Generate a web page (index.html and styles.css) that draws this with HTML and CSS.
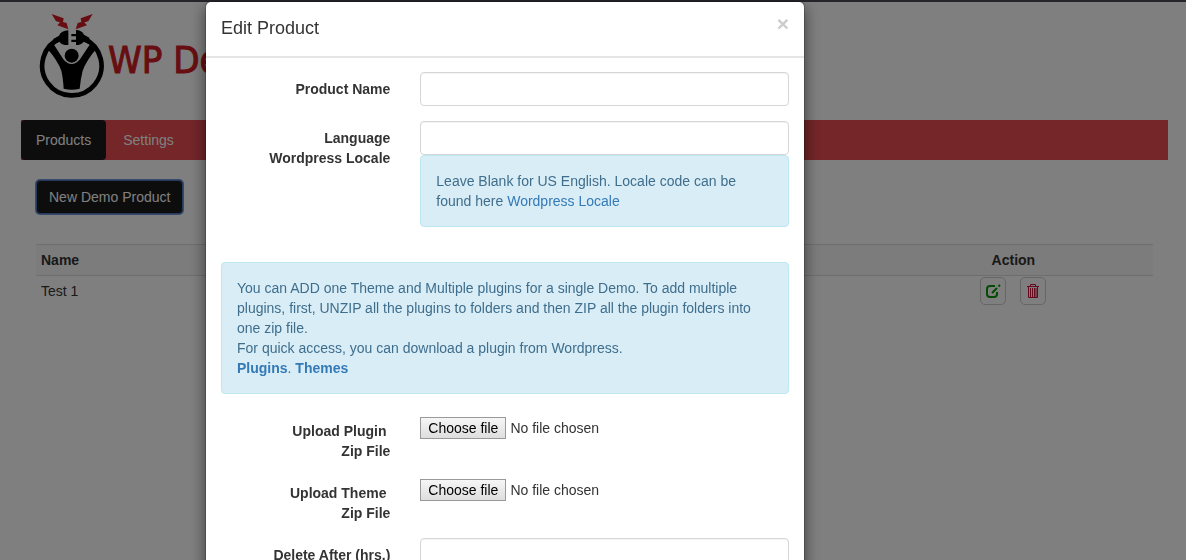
FILE: index.html
```html
<!DOCTYPE html>
<html lang="en">
<head>
<meta charset="utf-8">
<title>WP Demo Builder</title>
<link rel="stylesheet" href="styles.css">
</head>
<body>
<div class="page">
  <header class="brand">
    <svg class="brand-mark" viewBox="24 21 204 264" aria-hidden="true">
      <path d="M94 99 A89 89 0 1 0 162 101" fill="none" stroke="#000" stroke-width="14"/>
      <path d="M115 76 V120 H104 Q94 119 88 110 L70 120 V102 L87 92 Q94 77 115 76Z"/>
      <path d="M138 75 Q155 75 162 89 L178 98 V118 L161 110 Q154 120 138 120 V111 H124 V104 H138 V94 H124 V87 H138Z"/>
      <circle cx="125" cy="152" r="21"/>
      <path d="M52 131 L70 116 L100 163 Q111 177 125 177 Q139 177 150 163 L181 116 L199 131 Q168 168 158 197 Q152 220 149 251 Q125 257 101 251 Q99 218 94 197 Q84 168 52 131Z"/>
      <path fill="#cf1c25" d="M65 27 L101 40 L99 51 L110 54 L115 73 L82 61 L90 52 L78 49Z"/>
      <path fill="#cf1c25" d="M188 27 L152 40 L154 51 L143 54 L137 73 L171 61 L163 52 L175 49Z"/>
    </svg>
    <span class="brand-name">WP Demo Builder</span>
  </header>
  <nav class="tabs">
    <a class="tab tab-active" href="#products">Products</a>
    <a class="tab" href="#settings">Settings</a>
  </nav>
  <main class="content">
    <button type="button" class="btn-new">New Demo Product</button>
    <table class="products">
      <thead>
        <tr><th class="col-name" scope="col">Name</th><th class="col-action" scope="col">Action</th></tr>
      </thead>
      <tbody>
        <tr>
          <td>Test 1</td>
          <td>
            <div class="actions">
              <button type="button" class="icon-btn" aria-label="Edit">
                <svg viewBox="0 0 16 16" width="16" height="16" fill="none" stroke="#0a960a"><path stroke-width="2" d="M10 3H5Q2 3 2 6v5q0 3 3 3h4q3 0 3-3V9"/><path stroke-width="2" d="M7 10l5-5M13.500 3.500l1.500-1.500"/></svg>
              </button>
              <button type="button" class="icon-btn" aria-label="Delete">
                <svg viewBox="0 0 16 16" width="16" height="16" fill="none" stroke="#c8143c"><path d="M2 3.500h12M5.500 3V1.500h5V3M3.500 4v10.500h9V4M5.500 5v9M7.500 5v9"/><path d="M9.500 5v9M11 5v9" stroke-width="1"/></svg>
              </button>
            </div>
          </td>
        </tr>
      </tbody>
    </table>
  </main>
</div>

<div class="backdrop">
  <div class="modal" role="dialog" aria-modal="true" aria-labelledby="modal-title">
    <div class="modal-header">
      <h4 class="modal-title" id="modal-title">Edit Product</h4>
      <button type="button" class="close" aria-label="Close">×</button>
    </div>
    <form class="modal-body">
      <div class="form-row">
        <label class="form-label" for="name">Product Name</label>
        <div class="field"><input class="text-input" type="text" id="name"></div>
      </div>
      <div class="form-row">
        <label class="form-label" for="locale">Language<br>Wordpress Locale</label>
        <div class="field">
          <input class="text-input" type="text" id="locale">
          <div class="note">Leave Blank for US English. Locale code can be found here <a href="#locale">Wordpress Locale</a></div>
        </div>
      </div>
      <div class="note">
        You can ADD one Theme and Multiple plugins for a single Demo. To add multiple plugins, first, UNZIP all the plugins to folders and then ZIP all the plugin folders into one zip file.<br>
        For quick access, you can download a plugin from Wordpress.<br>
        <a class="strong" href="#plugins">Plugins</a>. <a class="strong" href="#themes">Themes</a>
      </div>
      <div class="form-row">
        <label class="form-label" for="plugin-zip">Upload Plugin&nbsp;<br>Zip File</label>
        <div class="field file">
          <span class="file-button">Choose file</span><span class="file-status">No file chosen</span>
          <input class="file-input" type="file" id="plugin-zip">
        </div>
      </div>
      <div class="form-row">
        <label class="form-label" for="theme-zip">Upload Theme&nbsp;<br>Zip File</label>
        <div class="field file">
          <span class="file-button">Choose file</span><span class="file-status">No file chosen</span>
          <input class="file-input" type="file" id="theme-zip">
        </div>
      </div>
      <div class="form-row">
        <label class="form-label" for="delete-after">Delete After (hrs.)</label>
        <div class="field"><input class="text-input" type="text" id="delete-after"></div>
      </div>
    </form>
  </div>
</div>
</body>
</html>
```
FILE: styles.css
```css
* { box-sizing: border-box; }

body {
  margin: 0;
  overflow: hidden;
  background: #fff;
  color: #333;
  font: 14px/20px "Liberation Sans", Arial, sans-serif;
}

button, input { font: inherit; }
a { color: #337ab7; text-decoration: none; }

.page {
  min-height: 100vh;
  padding: 0 18px 0 21px;
  border-top: 2px solid #484c52;
}

.brand {
  display: flex;
  align-items: flex-start;
  gap: 2px;
  height: 118px;
  padding: 10px 0 0 17px;
  overflow: hidden;
}
.brand-mark { flex: none; width: 68px; height: 88px; }
.brand-name {
  padding-top: 24px;
  color: #cf1c25;
  font: 38px/48px "DejaVu Sans Condensed", "DejaVu Sans", sans-serif;
  -webkit-text-stroke: 1px #cf1c25;
  white-space: nowrap;
}

.tabs {
  display: flex;
  gap: 2px;
  background: #e84c52;
}
.tab {
  padding: 10px 15px;
  border-radius: 4px;
  color: #fff;
}
.tab-active { background: #1a1a1a; }

.content { padding: 20px 15px; }

.btn-new {
  display: block;
  height: 34px;
  padding: 0 12px;
  border: 1px solid #4c74b8;
  border-radius: 4px;
  background: #1a1a1a;
  box-shadow: 0 0 0 1px #6f95d8;
  color: #fff;
}

.products {
  width: 100%;
  margin-top: 30px;
  border-collapse: collapse;
}
.products th {
  padding: 5px;
  border-top: 1px solid #ddd;
  border-bottom: 1px solid #ddd;
  background: #f9f9f9;
}
.products td { padding: 1px 5px; }
.col-name { text-align: left; }
.col-action { width: 25%; }

.actions {
  display: flex;
  justify-content: center;
  gap: 14px;
}
.icon-btn {
  display: grid;
  place-items: center;
  width: 26px;
  height: 28px;
  padding: 0;
  border: 1px solid #ccc;
  border-radius: 5px;
  background: #fff;
}

.backdrop {
  position: fixed;
  inset: 0;
  padding: 1px 16px 0 205px;
  overflow: hidden;
  background: rgba(0, 0, 0, .5);
}

.modal {
  max-width: 600px;
  border: 1px solid rgba(0, 0, 0, .2);
  border-radius: 6px;
  background: #fff;
  background-clip: padding-box;
  box-shadow: 0 5px 15px rgba(0, 0, 0, .5);
}
.modal-header {
  display: flex;
  justify-content: space-between;
  align-items: flex-start;
  padding: 14px 15px 16px;
  border-bottom: 2px solid #e5e5e5;
}
.modal-title {
  margin: 0;
  font-size: 18px;
  font-weight: normal;
  line-height: 24px;
}
.close {
  padding: 0;
  border: 0;
  background: none;
  color: #ccc;
  font-size: 21px;
  font-weight: bold;
  line-height: 16px;
}
.modal-body { padding: 14px 15px 15px; }

.form-row {
  display: grid;
  grid-template-columns: 1fr 2fr;
  margin: 0 -15px 15px;
}
.form-label {
  padding: 7px 15px 0;
  font-weight: bold;
  text-align: right;
}
.field { padding: 0 15px; }
.text-input {
  display: block;
  width: 100%;
  height: 34px;
  padding: 6px 12px;
  border: 1px solid #d6d6d6;
  border-radius: 4px;
  background: #fff;
  box-shadow: inset 0 1px 1px rgba(0, 0, 0, .05);
}

.note {
  margin-bottom: 20px;
  padding: 15px;
  border: 1px solid #bce8f1;
  border-radius: 4px;
  background: #d9edf7;
  color: #3f6e8c;
}
.strong { font-weight: bold; }

.file {
  position: relative;
  display: flex;
  align-items: flex-start;
  gap: 4px;
  padding-top: 3px;
}
.file-button {
  padding: 0 7px;
  border: 1px solid #999;
  background: linear-gradient(#f6f6f6, #dedede);
  color: #000;
}
.file-status { line-height: 22px; }
.file-input {
  position: absolute;
  inset: 0 15px;
  opacity: 0;
  cursor: pointer;
}
```
